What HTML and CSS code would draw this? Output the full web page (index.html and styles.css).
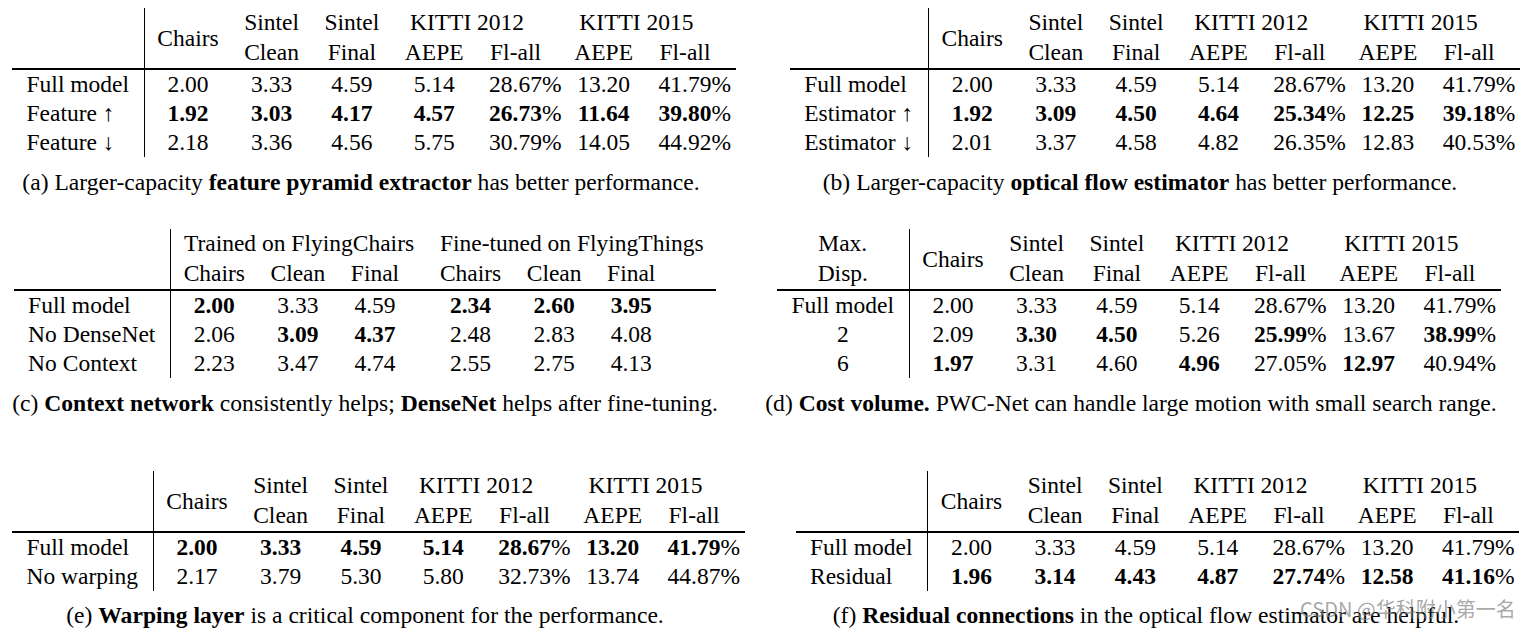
FILE: index.html
```html
<!DOCTYPE html>
<html>
<head>
<meta charset="utf-8">
<link rel="stylesheet" href="styles.css">
</head>
<body>
<div class="page">
  <div class="row row1">
    <div class="panel">
      <table class="tbl sh-a">
        <thead>
          <tr><th class="lab" rowspan="2"></th><th rowspan="2">Chairs</th><th>Sintel</th><th>Sintel</th><th colspan="2">KITTI 2012</th><th class="pc"></th><th colspan="2">KITTI 2015</th><th class="pc last"></th></tr>
          <tr><th>Clean</th><th>Final</th><th>AEPE</th><th class="fl">Fl-all</th><th class="pc"></th><th>AEPE</th><th class="fl">Fl-all</th><th class="pc last"></th></tr>
        </thead>
        <tbody>
          <tr><td class="lab">Full model</td><td>2.00</td><td>3.33</td><td>4.59</td><td>5.14</td><td class="fl">28.67</td><td class="pc">%</td><td>13.20</td><td class="fl">41.79</td><td class="pc last">%</td></tr>
          <tr><td class="lab">Feature ↑</td><td class="b">1.92</td><td class="b">3.03</td><td class="b">4.17</td><td class="b">4.57</td><td class="fl b">26.73</td><td class="pc">%</td><td class="b">11.64</td><td class="fl b">39.80</td><td class="pc last">%</td></tr>
          <tr><td class="lab">Feature ↓</td><td>2.18</td><td>3.36</td><td>4.56</td><td>5.75</td><td class="fl">30.79</td><td class="pc">%</td><td>14.05</td><td class="fl">44.92</td><td class="pc last">%</td></tr>
        </tbody>
      </table>
      <p class="cap cap-a">(a) Larger-capacity <b>feature pyramid extractor</b> has better performance.</p>
    </div>
    <div class="panel">
      <table class="tbl sh-b">
        <thead>
          <tr><th class="lab" rowspan="2"></th><th rowspan="2">Chairs</th><th>Sintel</th><th>Sintel</th><th colspan="2">KITTI 2012</th><th class="pc"></th><th colspan="2">KITTI 2015</th><th class="pc last"></th></tr>
          <tr><th>Clean</th><th>Final</th><th>AEPE</th><th class="fl">Fl-all</th><th class="pc"></th><th>AEPE</th><th class="fl">Fl-all</th><th class="pc last"></th></tr>
        </thead>
        <tbody>
          <tr><td class="lab">Full model</td><td>2.00</td><td>3.33</td><td>4.59</td><td>5.14</td><td class="fl">28.67</td><td class="pc">%</td><td>13.20</td><td class="fl">41.79</td><td class="pc last">%</td></tr>
          <tr><td class="lab">Estimator ↑</td><td class="b">1.92</td><td class="b">3.09</td><td class="b">4.50</td><td class="b">4.64</td><td class="fl b">25.34</td><td class="pc">%</td><td class="b">12.25</td><td class="fl b">39.18</td><td class="pc last">%</td></tr>
          <tr><td class="lab">Estimator ↓</td><td>2.01</td><td>3.37</td><td>4.58</td><td>4.82</td><td class="fl">26.35</td><td class="pc">%</td><td>12.83</td><td class="fl">40.53</td><td class="pc last">%</td></tr>
        </tbody>
      </table>
      <p class="cap">(b) Larger-capacity <b>optical flow estimator</b> has better performance.</p>
    </div>
  </div>

  <div class="row row2">
    <div class="panel">
      <table class="tbl">
        <thead>
          <tr><th class="lab" rowspan="2"></th><th colspan="3">Trained on FlyingChairs</th><th colspan="3">Fine-tuned on FlyingThings</th></tr>
          <tr><th>Chairs</th><th>Clean</th><th class="ex1">Final</th><th>Chairs</th><th>Clean</th><th class="ex2">Final</th></tr>
        </thead>
        <tbody>
          <tr><td class="lab">Full model</td><td class="b">2.00</td><td>3.33</td><td class="ex1">4.59</td><td class="b">2.34</td><td class="b">2.60</td><td class="b ex2">3.95</td></tr>
          <tr><td class="lab">No DenseNet</td><td>2.06</td><td class="b">3.09</td><td class="b ex1">4.37</td><td>2.48</td><td>2.83</td><td class="ex2">4.08</td></tr>
          <tr><td class="lab">No Context</td><td>2.23</td><td>3.47</td><td class="ex1">4.74</td><td>2.55</td><td>2.75</td><td class="ex2">4.13</td></tr>
        </tbody>
      </table>
      <p class="cap">(c) <b>Context network</b> consistently helps; <b>DenseNet</b> helps after fine-tuning.</p>
    </div>
    <div class="panel">
      <table class="tbl center-lab sh-d">
        <thead>
          <tr><th class="lab">Max.</th><th rowspan="2">Chairs</th><th>Sintel</th><th>Sintel</th><th colspan="2">KITTI 2012</th><th class="pc"></th><th colspan="2">KITTI 2015</th><th class="pc last"></th></tr>
          <tr><th class="lab">Disp.</th><th>Clean</th><th>Final</th><th>AEPE</th><th class="fl">Fl-all</th><th class="pc"></th><th>AEPE</th><th class="fl">Fl-all</th><th class="pc last"></th></tr>
        </thead>
        <tbody>
          <tr><td class="lab">Full model</td><td>2.00</td><td>3.33</td><td>4.59</td><td>5.14</td><td class="fl">28.67</td><td class="pc">%</td><td>13.20</td><td class="fl">41.79</td><td class="pc last">%</td></tr>
          <tr><td class="lab">2</td><td>2.09</td><td class="b">3.30</td><td class="b">4.50</td><td>5.26</td><td class="fl b">25.99</td><td class="pc">%</td><td>13.67</td><td class="fl b">38.99</td><td class="pc last">%</td></tr>
          <tr><td class="lab">6</td><td class="b">1.97</td><td>3.31</td><td>4.60</td><td class="b">4.96</td><td class="fl">27.05</td><td class="pc">%</td><td class="b">12.97</td><td class="fl">40.94</td><td class="pc last">%</td></tr>
        </tbody>
      </table>
      <p class="cap cap-d">(d) <b>Cost volume.</b> PWC-Net can handle large motion with small search range.</p>
    </div>
  </div>

  <div class="row row3">
    <div class="panel">
      <table class="tbl sh-e">
        <thead>
          <tr><th class="lab" rowspan="2"></th><th rowspan="2">Chairs</th><th>Sintel</th><th>Sintel</th><th colspan="2">KITTI 2012</th><th class="pc"></th><th colspan="2">KITTI 2015</th><th class="pc last"></th></tr>
          <tr><th>Clean</th><th>Final</th><th>AEPE</th><th class="fl">Fl-all</th><th class="pc"></th><th>AEPE</th><th class="fl">Fl-all</th><th class="pc last"></th></tr>
        </thead>
        <tbody>
          <tr><td class="lab">Full model</td><td class="b">2.00</td><td class="b">3.33</td><td class="b">4.59</td><td class="b">5.14</td><td class="fl b">28.67</td><td class="pc">%</td><td class="b">13.20</td><td class="fl b">41.79</td><td class="pc last">%</td></tr>
          <tr><td class="lab">No warping</td><td>2.17</td><td>3.79</td><td>5.30</td><td>5.80</td><td class="fl">32.73</td><td class="pc">%</td><td>13.74</td><td class="fl">44.87</td><td class="pc last">%</td></tr>
        </tbody>
      </table>
      <p class="cap">(e) <b>Warping layer</b> is a critical component for the performance.</p>
    </div>
    <div class="panel">
      <table class="tbl sh-f">
        <thead>
          <tr><th class="lab" rowspan="2"></th><th rowspan="2">Chairs</th><th>Sintel</th><th>Sintel</th><th colspan="2">KITTI 2012</th><th class="pc"></th><th colspan="2">KITTI 2015</th><th class="pc last"></th></tr>
          <tr><th>Clean</th><th>Final</th><th>AEPE</th><th class="fl">Fl-all</th><th class="pc"></th><th>AEPE</th><th class="fl">Fl-all</th><th class="pc last"></th></tr>
        </thead>
        <tbody>
          <tr><td class="lab">Full model</td><td>2.00</td><td>3.33</td><td>4.59</td><td>5.14</td><td class="fl">28.67</td><td class="pc">%</td><td>13.20</td><td class="fl">41.79</td><td class="pc last">%</td></tr>
          <tr><td class="lab">Residual</td><td class="b">1.96</td><td class="b">3.14</td><td class="b">4.43</td><td class="b">4.87</td><td class="fl b">27.74</td><td class="pc">%</td><td class="b">12.58</td><td class="fl b">41.16</td><td class="pc last">%</td></tr>
        </tbody>
      </table>
      <p class="cap cap-f">(f) <b>Residual connections</b> in the optical flow estimator are helpful.</p>
    </div>
  </div>
  <div class="watermark">CSDN @华科附小第一名</div>
</div>
</body>
</html>
```

FILE: styles.css
```css
html, body {
  margin: 0;
  padding: 0;
  background: #fff;
}
body {
  font-family: "Liberation Serif", "Times New Roman", serif;
  font-size: 23.5px;
  color: #000;
  width: 1527px;
  height: 629px;
  overflow: hidden;
}
.page {
  position: relative;
  width: 1527px;
  height: 629px;
}
.row {
  display: grid;
  grid-template-columns: 730px 774px;
  column-gap: 23px;
}
.row1 { padding-top: 8px; }
.row2 { margin-top: 35px; }
.row3 { margin-top: 56px; }
.panel {
  display: flex;
  flex-direction: column;
  align-items: center;
  min-width: 0;
}
.tbl {
  border-collapse: separate;
  border-spacing: 0;
  font-size: 23.5px;
}
.tbl th, .tbl td {
  padding: 0 12.75px;
  text-align: center;
  font-weight: normal;
  white-space: nowrap;
  vertical-align: middle;
}
.tbl th { height: 30px; line-height: 30px; }
.tbl thead tr:first-child th { height: 29px; line-height: 29px; }
.tbl thead tr:last-child th { height: 31px; line-height: 31px; }
.tbl td { height: 29px; line-height: 29px; }
.tbl tbody tr:first-child td {
  border-top: 2px solid #000;
}
.tbl .lab {
  text-align: left;
  border-right: 1px solid #000;
  padding-left: 14.5px;
  padding-right: 14.5px;
}
.center-lab .lab { text-align: center; }
.tbl .fl { padding-right: 0; }
.tbl .pc { padding: 0; text-align: left; }
.tbl .pc.last { padding-right: 5px; }
.tbl .b { font-weight: bold; }
.tbl .ex1 { padding-right: 28px; }
.tbl .ex2 { padding-right: 61px; }
.sh-a { margin-left: 18px; }
.sh-b { margin-left: 30px; }
.sh-d { margin-right: 2px; }
.sh-e { margin-left: 27px; }
.sh-f { margin-left: 35px; }
.cap {
  margin: 13px 0 0;
  font-size: 23.6px;
  line-height: 24px;
  white-space: nowrap;
}
.cap-a { margin-right: 8px; }
.cap-d { margin-right: 18px; }
.cap-f { margin-left: 12px; }
.row3 .cap { margin-top: 12px; }
.watermark {
  position: absolute;
  left: 1300px;
  top: 597px;
  font-family: "Noto Sans CJK SC", "Noto Sans", sans-serif;
  font-size: 20px;
  line-height: 24px;
  color: rgba(130, 130, 130, 0.7);
  white-space: nowrap;
}
```
